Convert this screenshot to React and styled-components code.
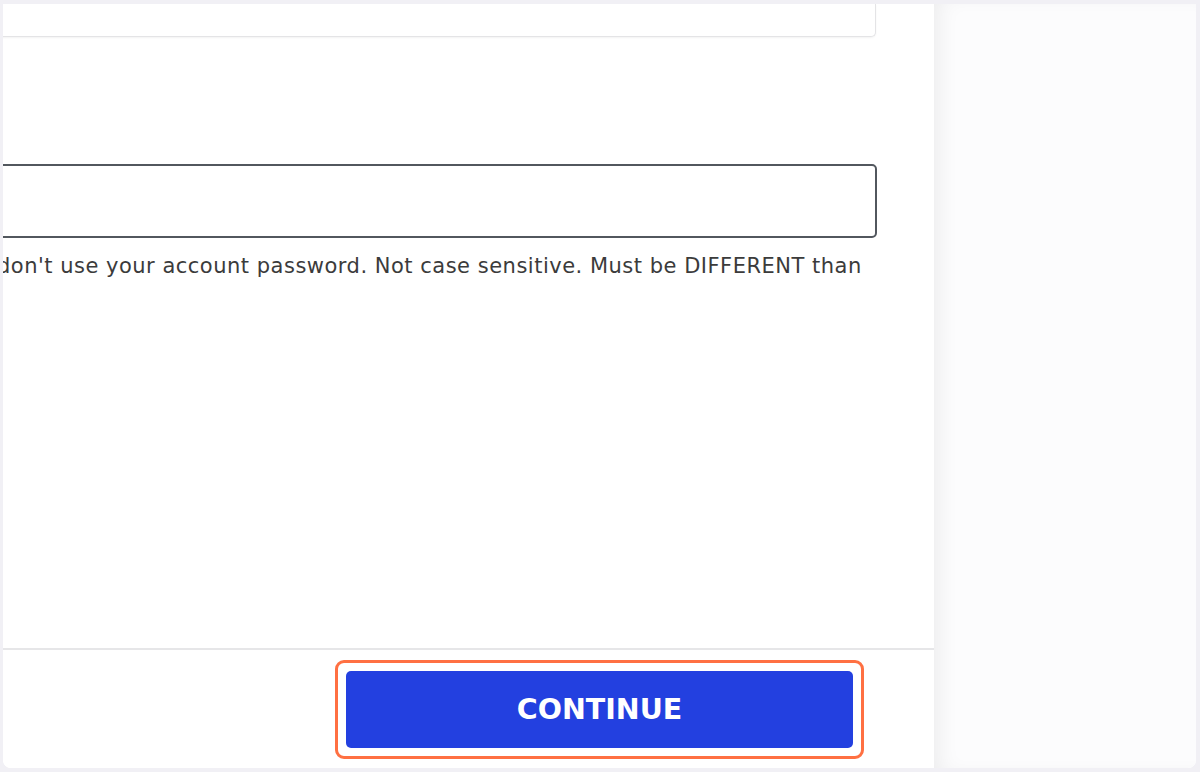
import React from "react";
import styled, { createGlobalStyle } from "styled-components";

const Global = createGlobalStyle`
  html, body { margin: 0; padding: 0; background: #f1f0f5; }
  body { font-family: "DejaVu Sans", Verdana, sans-serif; }
`;

const Frame = styled.div`
  width: 1200px;
  height: 772px;
  box-sizing: border-box;
  padding: 4px 4px 4px 3px;
  background: #f1f0f5;
  display: flex;
`;

const Inner = styled.div`
  flex: 1;
  display: flex;
  border-radius: 0 0 8px 8px;
  overflow: hidden;
  background: #ffffff;
`;

const Main = styled.div`
  width: 931px;
  display: flex;
  flex-direction: column;
  background: #ffffff;
  overflow: hidden;
  position: relative;
  z-index: 1;
`;

const Form = styled.div`
  flex: 1;
  display: flex;
  flex-direction: column;
  margin-left: -400px;
  padding-right: 57px;
`;

const TopCard = styled.div`
  height: 32px;
  margin-right: 1px;
  border: 1px solid #e4e4e6;
  border-top: none;
  border-radius: 0 0 5px 5px;
  box-shadow: 0 1px 2px rgba(0, 0, 0, 0.05);
  background: #fff;
`;

const Field = styled.div`
  margin-top: 127px;
  height: 74px;
  box-sizing: border-box;
  border: 2px solid #52575e;
  border-radius: 5px;
  background: #fff;
`;

const Helper = styled.p`
  margin: 14px 0 0 394px;
  font-size: 21px;
  letter-spacing: 0.5px;
  line-height: 28px;
  color: #3b3b3b;
  white-space: nowrap;
`;

const Footer = styled.div`
  margin-top: auto;
  border-top: 2px solid #e6e6e8;
  height: 120px;
  box-sizing: border-box;
  display: flex;
  justify-content: flex-end;
  padding: 10px 70px 0 0;
`;

const Focus = styled.div`
  width: 529px;
  height: 99px;
  box-sizing: border-box;
  border: 3px solid #ff7042;
  border-radius: 9px;
  padding: 8px;
  display: flex;
`;

const Button = styled.button`
  flex: 1;
  border: none;
  border-radius: 5px;
  background: #2340e0;
  color: #ffffff;
  font-family: "DejaVu Sans", Verdana, sans-serif;
  font-weight: bold;
  font-size: 28.5px;
  letter-spacing: 0;
  cursor: pointer;
`;

const Side = styled.div`
  flex: 1;
  background: #fcfcfd;
  box-shadow: inset 14px 0 22px -10px rgba(0, 0, 0, 0.07);
`;

export default function App() {
  return (
    <>
      <Global />
      <Frame>
        <Inner>
          <Main>
            <Form>
              <TopCard />
              <Field />
              <Helper>
                don't use your account password. Not case sensitive. Must be DIFFERENT than
              </Helper>
            </Form>
            <Footer>
              <Focus>
                <Button>CONTINUE</Button>
              </Focus>
            </Footer>
          </Main>
          <Side />
        </Inner>
      </Frame>
    </>
  );
}
